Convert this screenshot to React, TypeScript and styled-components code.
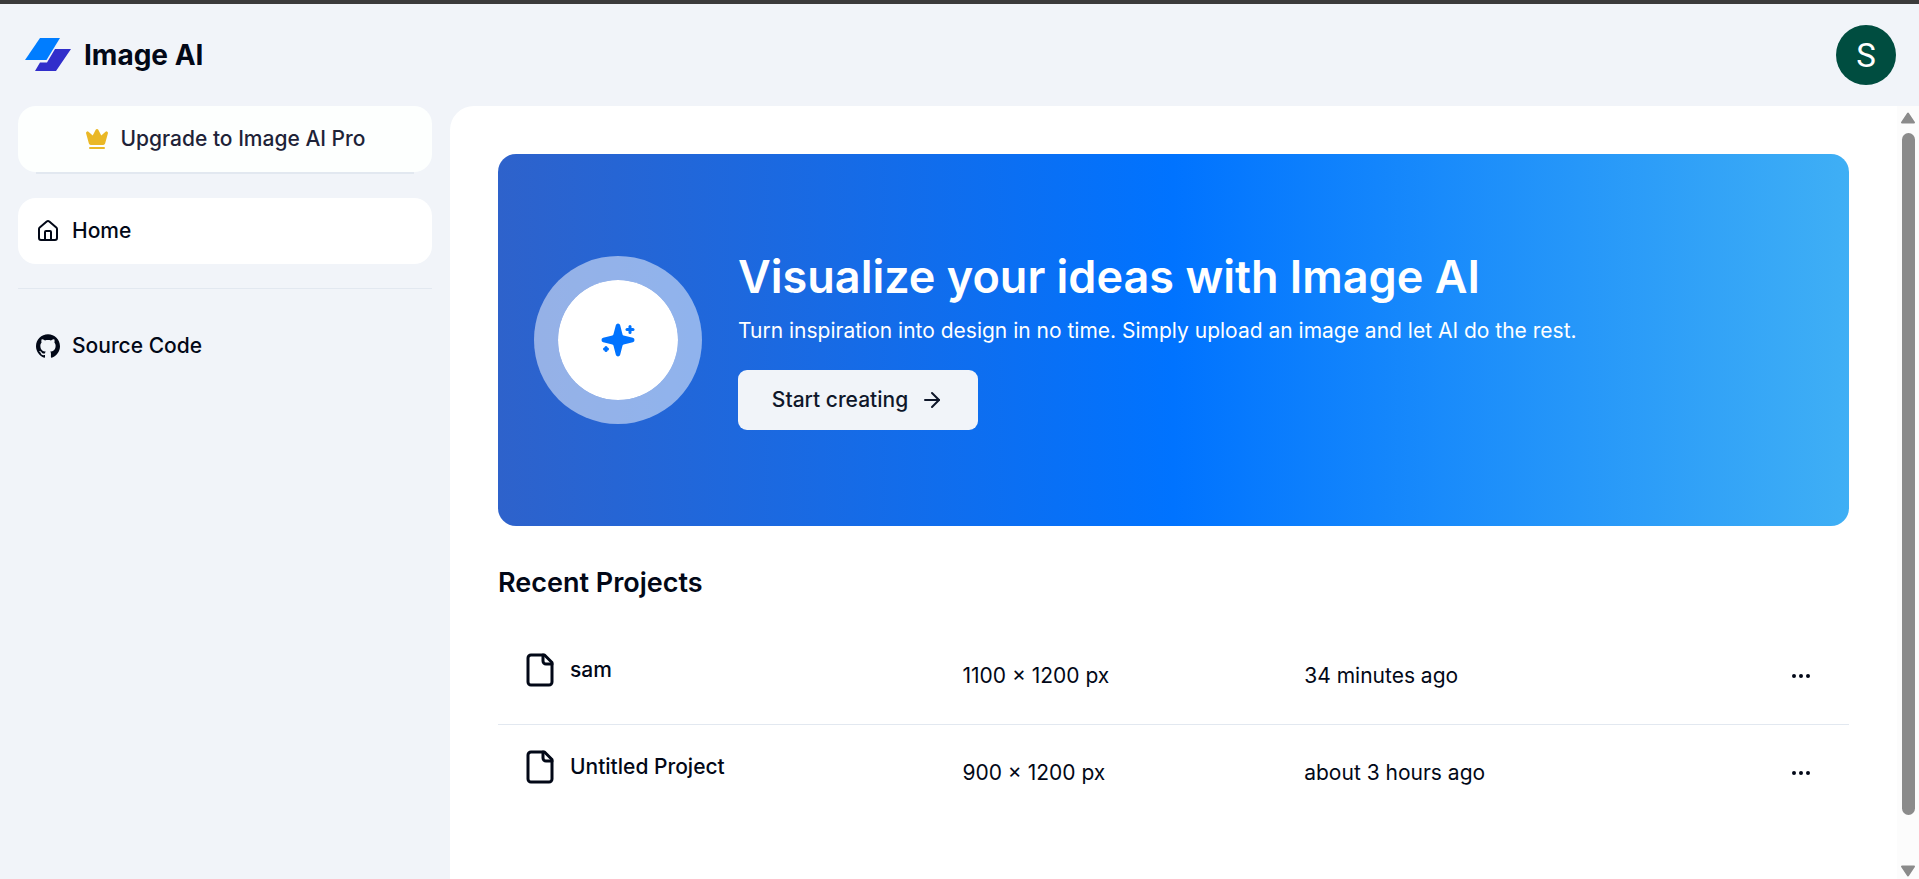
import React from 'react';
import styled, { createGlobalStyle } from 'styled-components';
import { ArrowRight, MoreHorizontal } from 'lucide-react';
import { SiGithub } from 'react-icons/si';

const GlobalStyle = createGlobalStyle`
  *, *::before, *::after { box-sizing: border-box; }
  body {
    margin: 0;
    font-family: Inter, "Liberation Sans", sans-serif;
    font-size: 21px;
    line-height: 30px;
    color: #020817;
    background: #f1f4f9;
  }
  h1, h2, p { margin: 0; }
  a { color: inherit; text-decoration: none; }
  button { font: inherit; color: inherit; border: 0; cursor: pointer; }
`;

const Page = styled.div`
  display: flex;
  flex-direction: column;
  height: 100vh;
  border-top: 4px solid #3b3b3b;
`;

const Header = styled.header`
  display: flex;
  align-items: center;
  justify-content: space-between;
  flex: none;
  height: 102px;
  padding: 0 23px 0 24px;
`;

const Brand = styled.a`
  display: flex;
  align-items: center;
  gap: 12px;
  font-size: 28px;
  line-height: 36px;
  font-weight: 700;
`;

const Avatar = styled.button`
  width: 60px;
  height: 60px;
  padding: 2px 0 0;
  border-radius: 50%;
  background: #004d40;
  color: #fff;
  font-family: Roboto, sans-serif;
  font-size: 33px;
`;

const Body = styled.div`
  display: flex;
  flex: 1;
  min-height: 0;
`;

const Sidebar = styled.aside`
  display: flex;
  flex-direction: column;
  flex: none;
  width: 450px;
  padding: 0 18px;
`;

const UpgradeButton = styled.button`
  display: flex;
  align-items: center;
  justify-content: center;
  gap: 12px;
  height: 66px;
  border-radius: 18px;
  background: #fdfffe;
  color: #1e2338;
  font-weight: 500;
`;

const Rule = styled.hr<{ $inset?: boolean }>`
  align-self: stretch;
  height: ${(p) => (p.$inset ? 2 : 1)}px;
  margin: ${(p) => (p.$inset ? '0 18px 24px' : '24px 0')};
  border: 0;
  background: #e2e8f0;
`;

const NavItem = styled.a<{ $active?: boolean }>`
  display: flex;
  align-items: center;
  gap: 12px;
  height: 66px;
  padding: 0 18px;
  border-radius: 18px;
  background: ${(p) => (p.$active ? '#fff' : 'transparent')};
  font-weight: 500;
`;

const Panel = styled.div`
  display: flex;
  flex: 1;
  min-width: 0;
  overflow: hidden;
  border-top-left-radius: 24px;
  background: #fff;
`;

const Content = styled.main`
  flex: 1;
  min-width: 0;
  padding: 48px 48px 108px;
  overflow-y: auto;
  scrollbar-width: none;
`;

const Hero = styled.section`
  display: flex;
  align-items: center;
  gap: 36px;
  min-height: 372px;
  padding: 36px;
  border-radius: 18px;
  background: linear-gradient(to right, #2e62cb, #0073ff, #3faff5);
  color: #fff;
`;

const Badge = styled.div`
  display: grid;
  place-items: center;
  flex: none;
  width: 168px;
  height: 168px;
  border: 24px solid rgba(255, 255, 255, 0.5);
  border-radius: 50%;
  background: #fff;
  background-clip: padding-box;
  color: #0073ff;
`;

const HeroCopy = styled.div`
  display: flex;
  flex-direction: column;
  align-items: flex-start;
`;

const HeroTitle = styled.h1`
  margin-bottom: 12px;
  font-size: 45px;
  line-height: 54px;
  font-weight: 600;
`;

const HeroText = styled.p`
  margin-bottom: 24px;
`;

const StartButton = styled.button`
  display: flex;
  align-items: center;
  justify-content: center;
  gap: 12px;
  width: 240px;
  height: 60px;
  border-radius: 9px;
  background: #f1f4f9;
  color: #0f172a;
  font-weight: 500;
`;

const SectionTitle = styled.h2`
  margin: 36px 0 24px;
  font-size: 27px;
  line-height: 42px;
  font-weight: 600;
`;

const Table = styled.table`
  width: 100%;
  table-layout: fixed;
  border-collapse: collapse;
`;

const Row = styled.tr`
  & + & { border-top: 1px solid #e2e8f0; }
`;

const Cell = styled.td<{ $top?: boolean; $end?: boolean }>`
  padding: 24px;
  vertical-align: ${(p) => (p.$top ? 'top' : 'middle')};
  text-align: ${(p) => (p.$end ? 'right' : 'left')};
`;

const NameCol = styled.col`
  width: 32.6%;
`;

const SizeCol = styled.col`
  width: 25.3%;
`;

const ProjectName = styled.a`
  display: flex;
  align-items: center;
  gap: 12px;
  font-weight: 500;
`;

const MenuButton = styled.button`
  display: inline-grid;
  place-items: center;
  width: 48px;
  height: 48px;
  padding: 0;
  border-radius: 9px;
  background: transparent;
  vertical-align: top;
`;

const ScrollTrack = styled.div`
  display: flex;
  flex-direction: column;
  align-items: center;
  flex: none;
  width: 22px;
  padding: 6px 0 2px;
  background: #fcfcfc;
`;

const ThumbArea = styled.div`
  flex: 1;
  width: 13px;
  padding: 9px 0 7px;
`;

const Thumb = styled.div`
  height: 94%;
  border-radius: 7px;
  background: #8b8b8b;
`;

const Svg24 = ({ size, children, filled }: { size: number; children: React.ReactNode; filled?: boolean }) => (
  <svg
    width={size}
    height={size}
    viewBox="0 0 24 24"
    fill={filled ? 'currentColor' : 'none'}
    stroke="currentColor"
    strokeWidth="2"
    strokeLinecap="round"
    strokeLinejoin="round"
    aria-hidden="true"
  >
    {children}
  </svg>
);

const Crown = styled.svg`
  color: #eab826;
`;

const Logo = () => (
  <svg width="48" height="36" viewBox="0 0 48 36" aria-hidden="true">
    <path d="M16 1H36L22.500 23H1Z" fill="#007dff" />
    <path d="M31 12H47L32 34H11L16 25.500H23Z" fill="#312ecb" />
  </svg>
);

const ScrollArrow = ({ down }: { down?: boolean }) => (
  <svg width="16" height="12" viewBox="0 0 16 12" aria-hidden="true">
    <path
      d={down ? 'M2 1.500H14L8 10.500Z' : 'M2 10.500H14L8 1.500Z'}
      fill="#8b8b8b"
      stroke="#8b8b8b"
      strokeWidth="2"
      strokeLinejoin="round"
    />
  </svg>
);

const projects = [
  { name: 'sam', size: '1100 × 1200 px', updated: '34 minutes ago' },
  { name: 'Untitled Project', size: '900 × 1200 px', updated: 'about 3 hours ago' },
];

export default function App() {
  return (
    <Page>
      <GlobalStyle />
      <Header>
        <Brand href="#">
          <Logo />
          Image AI
        </Brand>
        <Avatar type="button">S</Avatar>
      </Header>
      <Body>
        <Sidebar>
          <UpgradeButton type="button">
            <Crown
              width="24"
              height="24"
              viewBox="0 0 24 24"
              fill="currentColor"
              stroke="currentColor"
              strokeWidth="2"
              strokeLinecap="round"
              strokeLinejoin="round"
              aria-hidden="true"
            >
              <path d="M11.562 3.266a.5.5 0 0 1 .876 0L15.39 8.87a1 1 0 0 0 1.516.294L21.183 5.5a.5.5 0 0 1 .798.519l-2.834 10.246a1 1 0 0 1-.956.734H5.81a1 1 0 0 1-.957-.734L2.02 6.02a.5.5 0 0 1 .798-.519l4.276 3.664a1 1 0 0 0 1.516-.294z" />
              <path d="M5 21h14" />
            </Crown>
            Upgrade to Image AI Pro
          </UpgradeButton>
          <Rule $inset />
          <nav>
            <NavItem href="#" $active>
              <Svg24 size={24}>
                <path d="M15 21v-8a1 1 0 0 0-1-1h-4a1 1 0 0 0-1 1v8" />
                <path d="M3 10a2 2 0 0 1 .709-1.528l7-5.999a2 2 0 0 1 2.582 0l7 5.999A2 2 0 0 1 21 10v9a2 2 0 0 1-2 2H5a2 2 0 0 1-2-2z" />
              </Svg24>
              Home
            </NavItem>
          </nav>
          <Rule />
          <NavItem href="#">
            <SiGithub size={24} aria-hidden="true" />
            Source Code
          </NavItem>
        </Sidebar>
        <Panel>
          <Content>
            <Hero>
              <Badge>
                <Svg24 size={36} filled>
                  <path d="M9.937 15.5A2 2 0 0 0 8.5 14.063l-6.135-1.582a.5.5 0 0 1 0-.962L8.5 9.936A2 2 0 0 0 9.937 8.5l1.582-6.135a.5.5 0 0 1 .963 0L14.063 8.5A2 2 0 0 0 15.5 9.937l6.135 1.581a.5.5 0 0 1 0 .964L15.5 14.063a2 2 0 0 0-1.437 1.437l-1.582 6.135a.5.5 0 0 1-.963 0z" />
                  <path d="M20 3v4" />
                  <path d="M22 5h-4" />
                  <path d="M4 17v2" />
                  <path d="M5 18H3" />
                </Svg24>
              </Badge>
              <HeroCopy>
                <HeroTitle>Visualize your ideas with Image AI</HeroTitle>
                <HeroText>
                  Turn inspiration into design in no time. Simply upload an image and let AI do the rest.
                </HeroText>
                <StartButton type="button">
                  Start creating
                  <ArrowRight size={24} aria-hidden="true" />
                </StartButton>
              </HeroCopy>
            </Hero>
            <SectionTitle>Recent Projects</SectionTitle>
            <Table>
              <colgroup>
                <NameCol />
                <SizeCol />
                <col />
                <col />
              </colgroup>
              <tbody>
                {projects.map((project) => (
                  <Row key={project.name}>
                    <Cell $top>
                      <ProjectName href="#">
                        <Svg24 size={36}>
                          <path d="M15 2H6a2 2 0 0 0-2 2v16a2 2 0 0 0 2 2h12a2 2 0 0 0 2-2V7Z" />
                          <path d="M14 2v4a2 2 0 0 0 2 2h4" />
                        </Svg24>
                        {project.name}
                      </ProjectName>
                    </Cell>
                    <Cell>{project.size}</Cell>
                    <Cell>{project.updated}</Cell>
                    <Cell $end>
                      <MenuButton type="button" aria-label={`Options for ${project.name}`}>
                        <MoreHorizontal size={24} aria-hidden="true" />
                      </MenuButton>
                    </Cell>
                  </Row>
                ))}
              </tbody>
            </Table>
          </Content>
          <ScrollTrack aria-hidden="true">
            <ScrollArrow />
            <ThumbArea>
              <Thumb />
            </ThumbArea>
            <ScrollArrow down />
          </ScrollTrack>
        </Panel>
      </Body>
    </Page>
  );
}
